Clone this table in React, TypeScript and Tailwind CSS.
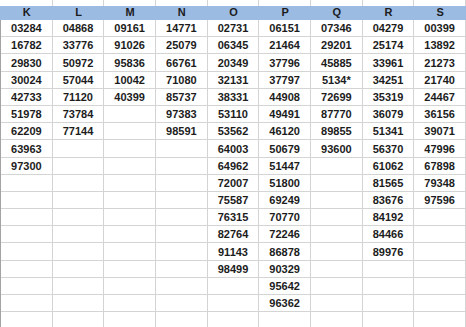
const COLUMNS: { letter: string; values: string[] }[] = [
  { letter: 'K', values: ['03284', '16782', '29830', '30024', '42733', '51978', '62209', '63963', '97300'] },
  { letter: 'L', values: ['04868', '33776', '50972', '57044', '71120', '73784', '77144'] },
  { letter: 'M', values: ['09161', '91026', '95836', '10042', '40399'] },
  { letter: 'N', values: ['14771', '25079', '66761', '71080', '85737', '97383', '98591'] },
  {
    letter: 'O',
    values: ['02731', '06345', '20349', '32131', '38331', '53110', '53562', '64003', '64962', '72007', '75587', '76315', '82764', '91143', '98499'],
  },
  {
    letter: 'P',
    values: ['06151', '21464', '37796', '37797', '44908', '49491', '46120', '50679', '51447', '51800', '69249', '70770', '72246', '86878', '90329', '95642', '96362'],
  },
  { letter: 'Q', values: ['07346', '29201', '45885', '5134*', '72699', '87770', '89855', '93600'] },
  {
    letter: 'R',
    values: ['04279', '25174', '33961', '34251', '35319', '36079', '51341', '56370', '61062', '81565', '83676', '84192', '84466', '89976'],
  },
  { letter: 'S', values: ['00399', '13892', '21273', '21740', '24467', '36156', '39071', '47996', '67898', '79348', '97596'] },
]

const ROW_COUNT = 18

export default function App() {
  const rows = Array.from({ length: ROW_COUNT }, (_, r) => COLUMNS.map(c => c.values[r] ?? ''))

  return (
    <div
      className="w-[466px] h-[327px] overflow-hidden bg-white text-[#1c1c1c]"
      style={{ fontFamily: '"Liberation Sans", Arial, sans-serif' }}
    >
      {/* partial row above the header */}
      <div className="grid grid-cols-9 w-[466px] h-[6px] pl-[1px]">
        {COLUMNS.map(c => (
          <div key={c.letter} className="border-r border-[#d4d4d4]" />
        ))}
      </div>

      {/* blue header band */}
      <div className="grid grid-cols-9 w-[466px] h-[14px] pl-[1px] bg-[#9bbbe3]">
        {COLUMNS.map(c => (
          <div key={c.letter} className="flex items-end justify-center pb-[2px] text-[11px] font-bold leading-none">
            {c.letter}
          </div>
        ))}
      </div>

      <div className="border-l border-[#a3a3a3] w-[466px]">
        {rows.map((row, r) => (
          <div key={r} className="grid grid-cols-9 w-[465px] h-[17.2px]">
            {row.map((v, i) => (
              <div
                key={i}
                className="flex items-end justify-center pb-[2px] border-r border-b border-[#d4d4d4] text-[11px] font-bold leading-none"
              >
                {v}
              </div>
            ))}
          </div>
        ))}
      </div>
    </div>
  )
}
